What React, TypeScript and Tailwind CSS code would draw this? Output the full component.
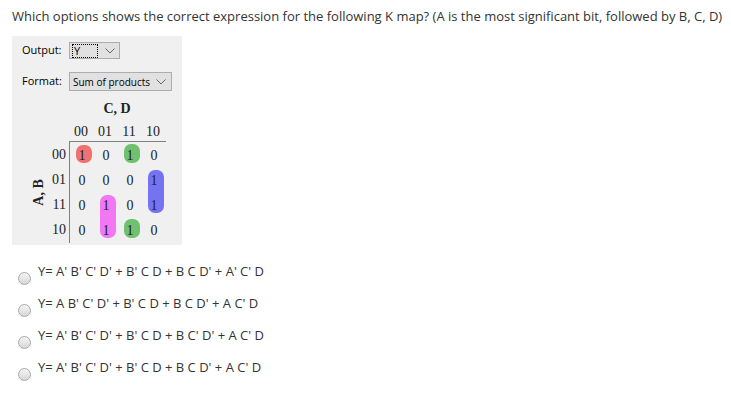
import React from "react";

const headers = ["00", "01", "11", "10"];

const cells = [
  ["1", "0", "1", "0"],
  ["0", "0", "0", "1"],
  ["0", "1", "0", "1"],
  ["0", "1", "1", "0"],
];

const colStart = ["col-start-1", "col-start-2", "col-start-3", "col-start-4"];
const rowStart = ["row-start-1", "row-start-2", "row-start-3", "row-start-4"];

// groups drawn behind the ones
const groups = [
  { cls: "col-start-1 row-start-1 h-[18px] bg-[#f07171]" },
  { cls: "col-start-3 row-start-1 h-[19px] bg-[#6fc06f]" },
  { cls: "col-start-4 row-start-2 row-span-2 h-[43px] bg-[#7474f2]" },
  { cls: "col-start-2 row-start-3 row-span-2 h-[43px] bg-[#f277f2]" },
  { cls: "col-start-3 row-start-4 h-[19px] bg-[#6fc06f]" },
];

const options = [
  "Y= A' B' C' D' + B' C D + B C D' + A' C' D",
  "Y= A B' C' D' + B' C D + B C D' + A C' D",
  "Y= A' B' C' D' + B' C D + B C' D' + A C' D",
  "Y= A' B' C' D' + B' C D + B C D' + A C' D",
];

const Chevron = () => (
  <svg width="10" height="6" viewBox="0 0 10 6" fill="none">
    <path d="M0.5 0.5 L5 5 L9.5 0.5" stroke="#666" strokeWidth="1" />
  </svg>
);

const App = () => {
  return (
    <div className="w-[731px] h-[416px] bg-white text-[#333] font-['Open_Sans',sans-serif]">
      <p className="pt-[7px] pl-[12px] text-[13px] leading-[18px]">
        Which options shows the correct expression for the following K map? (A is the most significant bit, followed by B, C, D)
      </p>

      {/* panel */}
      <div className="ml-[12px] mt-[11px] w-[170px] h-[209px] bg-[#f0f0f0] pt-[6px] text-[11px] text-black">
        <div className="flex items-center pl-[10px] h-[17px]">
          <span className="w-[47px]">Output:</span>
          <div className="w-[51px] h-[17px] border border-[#adadad] bg-[#e1e1e1] flex items-center">
            <span className="ml-[2px] w-[26px] h-[14px] border border-dotted border-black flex items-center pl-[1px] leading-none">
              Y
            </span>
            <span className="ml-[7px] flex items-center">
              <Chevron />
            </span>
          </div>
        </div>

        <div className="flex items-center pl-[10px] h-[19px] mt-[13px]">
          <span className="w-[47px]">Format:</span>
          <div className="w-[103px] h-[19px] border border-[#adadad] bg-[#e1e1e1] flex items-center pl-[3px]">
            <span className="leading-none whitespace-nowrap text-[10px]">Sum of products</span>
            <span className="ml-auto mr-[5px] flex items-center">
              <Chevron />
            </span>
          </div>
        </div>

        {/* k map */}
        <div className="pl-[16px] mt-[10px] font-['Liberation_Serif',serif] text-[14px] text-[#222]">
          <div className="flex h-[16px] leading-[16px]">
            <div className="w-[41px]" />
            <div className="w-[96px] text-center font-bold">C, D</div>
          </div>
          <div className="flex h-[16px] leading-[16px] mt-[7px]">
            <div className="w-[41px]" />
            {headers.map((h) => (
              <div key={h} className="w-[24px] text-center">
                {h}
              </div>
            ))}
          </div>
          <div className="flex mt-[1px]">
            <div className="w-[20px] flex items-center justify-center">
              <span className="-rotate-90 whitespace-nowrap font-bold">A, B</span>
            </div>
            <div className="w-[21px] flex flex-col pt-[1px]">
              {headers.map((h) => (
                <div key={h} className="h-[25px] flex items-center justify-end pr-[3px]">
                  {h}
                </div>
              ))}
            </div>
            <div className="border-l border-t border-[#7f7f7f] pt-[1px] w-[97px]">
              <div className="grid grid-cols-[repeat(4,24px)] grid-rows-[repeat(4,25px)] h-[100px]">
                {groups.map((g, i) => (
                  <div
                    key={i}
                    className={`${g.cls} w-[16px] ml-[3px] mb-[4px] self-center justify-self-center rounded-[7px]`}
                  />
                ))}
                {cells.map((row, r) =>
                  row.map((v, c) => (
                    <div
                      key={`${r}-${c}`}
                      className={`${colStart[c]} ${rowStart[r]} flex items-center justify-center relative`}
                    >
                      {v}
                    </div>
                  ))
                )}
              </div>
            </div>
          </div>
        </div>
      </div>

      {/* answer options */}
      <div className="mt-[18px] pl-[18px] text-[13px]">
        {options.map((o) => (
          <div key={o} className="flex items-start h-[32px]">
            <span className="mt-[9px] w-[13px] h-[13px] rounded-full border border-[#a9a9a9] bg-gradient-to-b from-[#f6f6f6] to-[#d6d6d6] shrink-0" />
            <span className="ml-[7px] leading-[16px]">{o}</span>
          </div>
        ))}
      </div>
    </div>
  );
};

export default App;
